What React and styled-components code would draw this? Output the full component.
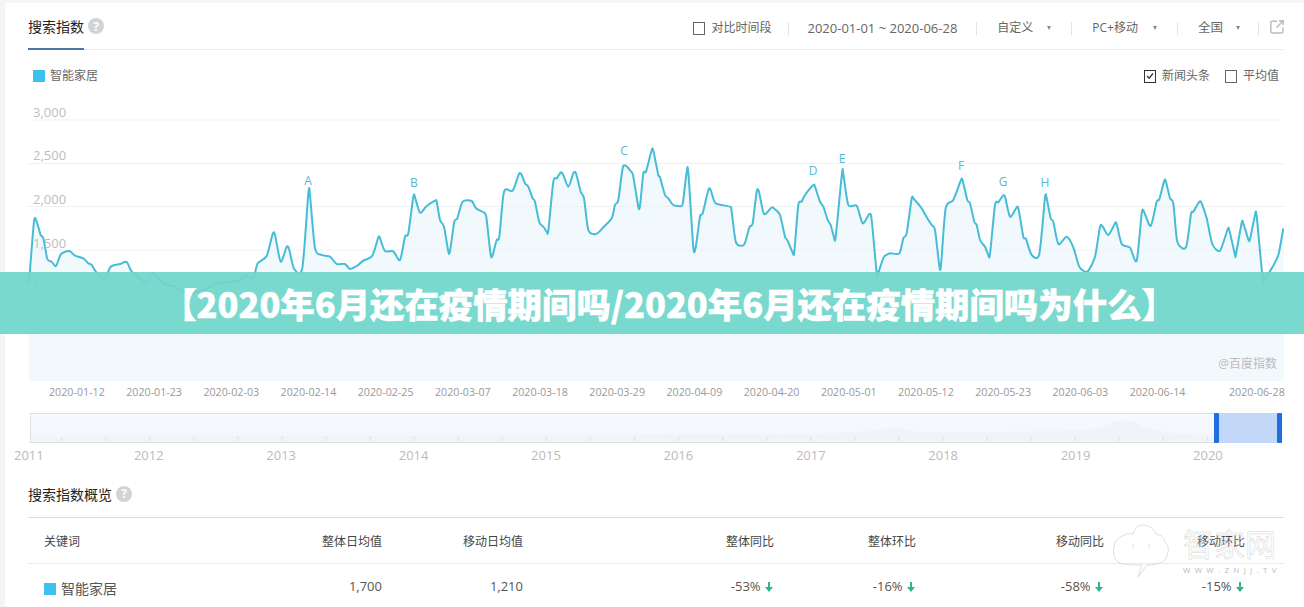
import styled, { createGlobalStyle } from 'styled-components'

const GlobalStyle = createGlobalStyle`
    html, body {
        margin: 0;
        padding: 0;
        height: 607px;
        overflow: hidden;
        background: #f5f5f7;
        font-family: "Open Sans", "Noto Sans CJK SC", sans-serif;
    }
`

// traced from the reference, [offset, x, y, x, y ...] in 3x crop units
const strips = [
    [20, 27,430,42,245,50,245,62,285,70,295,82,357,95,365,108,378,123,342,148,333,165,347,190,355,205,370,215,375,230,398,255,414,272,380,300,372,320,366,335,395,355,410,380,428,400,398,420,420,440,435,465,440,490,455,520,458,560,445,590,430,635,426,660,420,675,408,700,414,713,370,740,348,758,282,765,285,782,365,800,320,808,330,822,386,847,385,865,160,870,165,885,325,905,345,930,350,950,372],
    [340, 15,372,30,387,50,378,70,362,97,347,115,292,120,295,135,333,160,334,180,360,195,290,205,280,220,170,225,172,240,218,258,200,285,182,290,185,300,240,312,260,325,335,330,333,343,245,352,235,368,185,395,183,408,205,435,220,440,240,452,345,458,345,470,300,478,290,492,155,518,152,537,102,545,105,555,130,565,140,578,175,585,185,598,247,610,260,620,275,625,272,640,125,650,115,662,97,670,105,685,140,700,100,708,100,722,155,732,175,745,270,768,282,790,262,815,235,825,195,835,180,850,78,875,97,880,110,895,200,900,198,910,100,918,95,935,30,940,32,955,105],
    [660, 0,112,15,165,25,175,40,195,65,198,70,180,80,95,85,97,100,322,107,322,120,230,128,220,145,150,152,150,167,190,210,200,215,215,228,307,252,314,268,262,278,250,290,155,297,155,312,222,335,202,345,208,360,225,375,290,382,300,398,338,403,335,415,195,425,185,435,165,460,135,465,140,480,185,490,200,503,240,512,255,522,292,527,290,546,100,550,102,565,195,590,197,608,250,628,222,635,240,650,398,655,398,672,350,690,340,718,340,730,295,740,280,755,175,762,178,785,205,800,232,815,255,825,270,838,378,843,376,857,205,880,180,903,120,908,122,922,180,930,190,943,245,950,255],
    [980, 0,300,15,320,25,345,30,343,45,195,55,187,68,168,75,170,90,230,108,205,115,205,130,290,138,297,155,345,178,342,195,173,200,175,212,235,220,245,235,312,260,290,280,322,298,380,322,395,345,350,360,260,368,260,385,285,405,250,410,252,425,312,450,323,470,362,485,220,492,215,512,258,530,185,538,178,553,122,558,125,570,175,580,190,592,305,618,322,633,222,640,215,658,185,665,190,680,235,697,312,720,332,743,268,748,270,765,345,768,342,785,248,790,250,805,298,810,298,825,225,830,228,848,415,855,415,875,385,895,345,910,265],
]

const points = strips.flatMap(([offset, ...v]) => {
    const out = []
    for (let i = 0; i < v.length; i += 2) out.push([v[i] / 3 + offset, v[i + 1] / 3 + 140])
    return out
})

function smooth(pts) {
    let d = `M${pts[0][0]} ${pts[0][1]}`
    for (let i = 0; i < pts.length - 1; i++) {
        const p0 = pts[i - 1] || pts[i]
        const p1 = pts[i]
        const p2 = pts[i + 1]
        const p3 = pts[i + 2] || p2
        const c1x = p1[0] + (p2[0] - p0[0]) / 8
        const c1y = p1[1] + (p2[1] - p0[1]) / 8
        const c2x = p2[0] - (p3[0] - p1[0]) / 8
        const c2y = p2[1] - (p3[1] - p1[1]) / 8
        d += `C${c1x.toFixed(1)} ${c1y.toFixed(1)} ${c2x.toFixed(1)} ${c2y.toFixed(1)} ${p2[0].toFixed(1)} ${p2[1].toFixed(1)}`
    }
    return d
}

const linePath = smooth(points)
const areaPath = `${linePath}L1284 381L29 381Z`

const gridLines = [120, 163.5, 206.5, 250, 293, 336]
const yLabels = [['3,000', 112], ['2,500', 155.5], ['2,000', 199], ['1,500', 243], ['1,000', 286], ['500', 329]]
const marks = [['A', 308, 180], ['B', 414, 182], ['C', 624, 150], ['D', 813, 170], ['E', 842, 158], ['F', 961, 165], ['G', 1003, 181], ['H', 1045, 182]]
const dates = ['2020-01-12', '2020-01-23', '2020-02-03', '2020-02-14', '2020-02-25', '2020-03-07', '2020-03-18', '2020-03-29', '2020-04-09', '2020-04-20', '2020-05-01', '2020-05-12', '2020-05-23', '2020-06-03', '2020-06-14', '2020-06-28']
const years = [2012, 2013, 2014, 2015, 2016, 2017, 2018, 2019, 2020]
const ticks = Array.from({ length: 28 }, (_, i) => 60.7 + i * 44.1)

const DownArrow = () => (
    <ArrowSvg viewBox="0 0 8 10">
        <path d="M3 0h2v5h3L4 10 0 5h3z" />
    </ArrowSvg>
)

const Caret = styled.i`
    width: 0;
    height: 0;
    margin-left: ${p => p.$gap || 14}px;
    border-left: 2.5px solid transparent;
    border-right: 2.5px solid transparent;
    border-top: 4px solid #888;
`

function App() {
    return (
        <Page>
            <GlobalStyle />
            <Panel>
                <Header>
                    <Title>
                        搜索指数
                        <Help>?</Help>
                    </Title>
                    <Toolbar>
                        <ToolItem $right={17}>
                            <Box />
                            <Label>对比时间段</Label>
                        </ToolItem>
                        <ToolItem><DateText>2020-01-01 ~ 2020-06-28</DateText></ToolItem>
                        <ToolItem><Label>自定义</Label><Caret /></ToolItem>
                        <ToolItem><Label>PC+移动</Label><Caret $gap={15} /></ToolItem>
                        <ToolItem $right={18}><Label $size={12.5}>全国</Label><Caret $gap={13} /></ToolItem>
                        <ExportIcon viewBox="0 0 14 14" fill="none">
                            <path d="M7 1.2H2.2a1.4 1.4 0 0 0-1.4 1.4v9a1.4 1.4 0 0 0 1.4 1.4h9.4a1.4 1.4 0 0 0 1.4-1.4V7.5" />
                            <path d="M6.5 7.5 13 1M9 .8h4.2V5" />
                        </ExportIcon>
                    </Toolbar>
                </Header>

                <LegendRow>
                    <Legend>
                        <Swatch />
                        <Label>智能家居</Label>
                    </Legend>
                    <Options>
                        <Option>
                            <Box $checked>
                                <svg viewBox="0 0 12 12" width="10" height="10" fill="none" stroke="#333" strokeWidth="1.5">
                                    <path d="M2.5 6 5 8.7 9.5 3" />
                                </svg>
                            </Box>
                            <Label>新闻头条</Label>
                        </Option>
                        <Option>
                            <Box />
                            <Label>平均值</Label>
                        </Option>
                    </Options>
                </LegendRow>

                <ChartSvg viewBox="28 95 1256 287">
                    <path d={areaPath} fill="#f1f9fc" />
                    {gridLines.map(y => (
                        <line key={y} x1="28" x2="1284" y1={y} y2={y} stroke="#eef1f3" strokeWidth="1" />
                    ))}
                    <path d={linePath} fill="none" stroke="#46bcd7" strokeWidth="2" strokeLinejoin="round" />
                    {yLabels.map(([text, y]) => (
                        <AxisText key={text} x="33" y={y + 4.5}>{text}</AxisText>
                    ))}
                    {marks.map(([text, x, y]) => (
                        <MarkText key={text} x={x} y={y + 4.5} textAnchor="middle">{text}</MarkText>
                    ))}
                    <CreditText x="1277" y="367.5" textAnchor="end">@百度指数</CreditText>
                </ChartSvg>

                <DateRow>
                    {dates.map(date => <DateTick key={date}>{date}</DateTick>)}
                </DateRow>

                <Slider>
                    <SliderSvg viewBox="30 413 1252 30" preserveAspectRatio="none">
                        <path d="M31 442V438C200 436 400 437 560 436C640 435 700 434 780 435C840 434 870 432 889 428C900 427 905 429 915 432C960 434 1020 432 1070 431C1090 431 1105 428 1115 421C1125 419 1132 420 1137 423C1150 433 1180 435 1214 436V442Z" fill="#f0f3f8" />
                        {ticks.map(x => (
                            <line key={x} x1={x} x2={x} y1="437.5" y2="442" stroke="#dedede" />
                        ))}
                    </SliderSvg>
                    <SliderRange />
                    <SliderHandle $side="left" />
                    <SliderHandle $side="right" />
                </Slider>

                <YearRow>
                    <Year $first>2011</Year>
                    {years.map(year => <Year key={year}>{year}</Year>)}
                </YearRow>

                <SectionTitle>
                    搜索指数概览
                    <Help>?</Help>
                </SectionTitle>

                <Table>
                    <HeadRow>
                        <span>关键词</span>
                        <Cell>整体日均值</Cell>
                        <Cell>移动日均值</Cell>
                        <Cell>整体同比</Cell>
                        <Cell>整体环比</Cell>
                        <Cell>移动同比</Cell>
                        <Cell>移动环比</Cell>
                    </HeadRow>
                    <BodyRow>
                        <Keyword>
                            <Swatch />
                            智能家居
                        </Keyword>
                        <Cell>1,700</Cell>
                        <Cell>1,210</Cell>
                        <Cell>-53% <DownArrow /></Cell>
                        <Cell>-16% <DownArrow /></Cell>
                        <Cell>-58% <DownArrow /></Cell>
                        <Cell>-15% <DownArrow /></Cell>
                    </BodyRow>
                </Table>
            </Panel>

            <Banner>【2020年6月还在疫情期间吗/2020年6月还在疫情期间吗为什么】</Banner>

            <Watermark>
                <CloudSvg viewBox="0 0 56 55" fill="none">
                    <path d="M7 40C2 38 0 32 .5 27C1 20 4 15 8 14C12 11 17 10 20 11C22 5 26 2 30 2C36 2 41 6 43 11C48 12 52 15 52 19C55 22 56 26 55 29C54 35 51 39 47 40C42 42 38 42 34 42L25 54L29 42C22 42 12 42 7 40Z" />
                    <path d="M20 21v5M36 21v5" />
                </CloudSvg>
                <WatermarkText>
                    <WatermarkName>智家网</WatermarkName>
                    <WatermarkUrl>WWW.ZNJJ.TV</WatermarkUrl>
                </WatermarkText>
            </Watermark>
        </Page>
    )
}

export default App

const Page = styled.div`
    position: relative;
    height: 604px;
    padding: 3px 0 0 5px;
    overflow: hidden;
`

const Panel = styled.div`
    height: 604px;
    padding: 0 20px 0 23px;
    background: #fff;
    color: #666;
`

const Header = styled.div`
    display: flex;
    justify-content: space-between;
    align-items: center;
    height: 46px;
    border-bottom: 1px solid #eaeaea;
`

const Title = styled.div`
    position: relative;
    display: flex;
    align-items: center;
    gap: 4px;
    height: 46px;
    font-size: 14px;
    color: #222;

    &::after {
        content: '';
        position: absolute;
        left: 0;
        bottom: -1px;
        width: 56px;
        height: 2px;
        background: #4a76a8;
    }
`

const Help = styled.span`
    display: inline-flex;
    justify-content: center;
    align-items: center;
    width: 16px;
    height: 16px;
    border-radius: 50%;
    background: #d3d3d6;
    color: #fff;
    font-size: 12px;
    font-weight: 700;
`

const Toolbar = styled.div`
    display: flex;
    align-items: center;
    margin-top: 4px;
`

const ToolItem = styled.div`
    display: flex;
    align-items: center;
    height: 13px;
    padding: 0 ${p => p.$right || 20}px 0 20px;
    border-right: 1px solid #e4e4e4;
`

const Label = styled.span`
    font-size: ${p => p.$size || 12}px;
    line-height: 14px;
    color: #666;
`

const DateText = styled.span`
    font-size: 13px;
    margin: 0 -1px 0 -2px;
    color: #666;
`

const Box = styled.span`
    display: inline-flex;
    justify-content: center;
    align-items: center;
    box-sizing: border-box;
    width: 12px;
    height: 13px;
    margin-right: 6px;
    border: 1px solid ${p => (p.$checked ? '#333' : '#666')};
`

const ExportIcon = styled.svg`
    width: 14px;
    height: 14px;
    margin-left: 11px;
    margin-top: -2px;
    stroke: #bdbdbd;
    stroke-width: 1.5;
`

const LegendRow = styled.div`
    display: flex;
    justify-content: space-between;
    align-items: center;
    box-sizing: border-box;
    height: 45px;
    padding: 7px 5px 0;
`

const Legend = styled.div`
    display: flex;
    align-items: center;
    gap: 5px;
`

const Swatch = styled.span`
    display: inline-block;
    width: 12px;
    height: 12px;
    background: #3ec1f0;
`

const Options = styled.div`
    display: flex;
    gap: 15px;
`

const Option = styled.div`
    display: flex;
    align-items: center;
`

const ChartSvg = styled.svg`
    display: block;
    width: 1256px;
    height: 287px;
`

const AxisText = styled.text`
    font-size: 13px;
    fill: #bdbdbd;
`

const MarkText = styled.text`
    font-size: 12px;
    fill: #58b8d0;
`

const CreditText = styled.text`
    font-size: 12px;
    fill: #bbb;
`

const DateRow = styled.div`
    display: flex;
    gap: 22.2px;
    height: 20px;
    align-items: center;
    padding-left: 21px;
`

const DateTick = styled.span`
    width: 55px;
    font-size: 10.7px;
    white-space: nowrap;
    color: #999;

    &:last-child {
        margin-left: auto;
    }
`

const Slider = styled.div`
    position: relative;
    box-sizing: border-box;
    width: 1252px;
    height: 30px;
    margin: 11px 0 0 2px;
    border: 1px solid #dedede;
    border-right: 0;
    background: linear-gradient(#f6f9fe, #f4f6fa);
`

const SliderSvg = styled.svg`
    display: block;
    width: 100%;
    height: 100%;
`

const SliderRange = styled.div`
    position: absolute;
    top: -1px;
    bottom: -1px;
    right: 0;
    width: 68px;
    background: #c3d8f8;
`

const SliderHandle = styled.div`
    position: absolute;
    top: -1px;
    bottom: -1px;
    right: ${p => (p.$side === 'left' ? 63 : 0)}px;
    width: 5px;
    border-radius: 1px;
    background: #1f6fe0;
`

const YearRow = styled.div`
    display: flex;
    align-items: center;
    height: 23px;
    margin-left: -14px;
`

const Year = styled.span`
    flex: none;
    width: ${p => (p.$first ? 27 : 132.4)}px;
    margin-right: ${p => (p.$first ? 41.6 : 0)}px;
    font-size: 13px;
    text-align: center;
    color: #bbb;
`

const SectionTitle = styled.div`
    display: flex;
    align-items: center;
    gap: 4px;
    height: 52px;
    box-sizing: border-box;
    padding: 11px 0 7px;
    border-bottom: 1px solid #dcdcdc;
    font-size: 14px;
    color: #222;
`

const Table = styled.div`
    padding-left: 16px;
`

const columns = '198px 140px 141px 251px 142px 188px 141px'

const HeadRow = styled.div`
    display: grid;
    grid-template-columns: ${columns};
    align-items: center;
    height: 45px;
    margin-left: -16px;
    padding-left: 16px;
    border-bottom: 1px solid #eaeaea;
    font-size: 12px;
    color: #444;
`

const BodyRow = styled.div`
    display: grid;
    grid-template-columns: ${columns};
    padding-top: 13px;
    font-size: 13px;
    line-height: 18px;
    color: #555;
`

const Cell = styled.span`
    text-align: right;
`

const Keyword = styled.span`
    display: flex;
    align-items: center;
    gap: 5px;
    margin-top: 3px;
    font-size: 14px;
    color: #555;
`

const ArrowSvg = styled.svg`
    width: 8px;
    height: 10px;
    margin: 0 1px 0 1px;
    vertical-align: -1px;
    fill: #2eb58f;
`

const Banner = styled.div`
    position: absolute;
    top: 272px;
    left: 0;
    right: 0;
    height: 62px;
    padding-left: 34px;
    display: flex;
    justify-content: center;
    align-items: center;
    background: rgba(112, 214, 203, 0.93);
    color: #fff;
    font-family: "Noto Sans CJK SC", sans-serif;
    font-size: 34.4px;
    font-weight: 900;
    -webkit-text-stroke: 0.5px #fff;
    white-space: nowrap;
`

const Watermark = styled.div`
    position: absolute;
    top: 523px;
    left: 1113px;
    display: flex;
    gap: 14px;
`

const CloudSvg = styled.svg`
    width: 56px;
    height: 55px;
    stroke: #d4d4d4;
    stroke-width: 0.8;
`

const WatermarkText = styled.div`
    display: flex;
    flex-direction: column;
    padding-top: 2px;
`

const WatermarkName = styled.span`
    font-family: "Noto Sans CJK SC", sans-serif;
    font-size: 31px;
    line-height: 36px;
    color: transparent;
    -webkit-text-stroke: 0.5px #d4d4d4;
`

const WatermarkUrl = styled.span`
    margin-top: 3px;
    font-size: 8px;
    letter-spacing: 4.3px;
    white-space: nowrap;
    color: #bbb;
`
